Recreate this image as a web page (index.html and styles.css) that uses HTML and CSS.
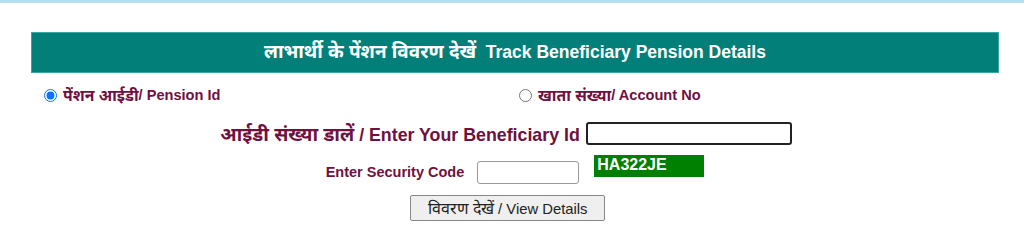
FILE: index.html
```html
<!DOCTYPE html>
<html lang="hi">
<head>
  <meta charset="UTF-8" />
  <title>Track Beneficiary Pension Details</title>
  <link rel="stylesheet" href="styles.css">
</head>
<body>
  <!-- top strip -->
  <div class="topline"></div>

  <div class="panel">
    <!-- Heading -->
    <div class="head"><span class="hi">लाभार्थी के पेंशन विवरण देखें</span>&nbsp; Track Beneficiary Pension Details</div>

    <!-- Search type -->
    <div class="choices">
      <label class="choice first"><input type="radio" name="kind" checked><span class="hi">पेंशन आईडी</span>/ Pension Id</label>
      <label class="choice"><input type="radio" name="kind"><span class="hi">खाता संख्या</span>/ Account No</label>
    </div>

    <!-- Beneficiary id -->
    <div class="row id-row">
      <span class="big-label"><span class="hi">आईडी संख्या डालें</span> / Enter Your Beneficiary Id</span>
      <input type="text" class="id-box" autofocus>
    </div>

    <!-- Captcha -->
    <div class="row code-row">
      <span class="small-label">Enter Security Code</span>
      <input type="text" class="code-box">
      <span class="captcha">HA322JE</span>
    </div>

    <div class="row btn-row">
      <button class="btn"><span class="hi">विवरण देखें</span> / View Details</button>
    </div>
  </div>
</body>
</html>
```

FILE: styles.css
```css
* {
  box-sizing: border-box;
}

body {
  margin: 0;
  font-family: 'Liberation Sans', Arial, 'Noto Sans', sans-serif;
  background: #fff;
  color: #701040;
}

/* Devanagari runs a little larger than the latin text */
.hi {
  font-size: 1.08em;
}

.topline {
  height: 3px;
  background: #b5def2;
}

.panel {
  width: 968px;
  margin: 29px 0 0 31px;
}

/* Teal title bar */
.head {
  height: 41px;
  line-height: 37px;
  background: #037f7a;
  border: 1px solid #3aa6a2;
  color: #fff;
  font-size: 17.5px;
  font-weight: bold;
  text-align: center;
}

.choices {
  display: grid;
  grid-template-columns: 488px 480px;
  margin-top: 11px;
  height: 20px;
  align-items: center;
}

.choice {
  display: flex;
  align-items: center;
  font-size: 14.6px;
  font-weight: bold;
  white-space: pre;
}

.choice input {
  margin: 0 6px 0 0;
  width: 13px;
  height: 13px;
}

.choice.first {
  padding-left: 13px;
}

.row {
  display: flex;
  justify-content: center;
  align-items: center;
}

.id-row {
  margin-top: 16px;
  padding-right: 18px;
}

.big-label {
  font-size: 17.8px;
  font-weight: bold;
  margin-right: 6px;
}

.id-box {
  width: 206px;
  height: 23px;
  border: 2px solid #222;
  border-radius: 3px;
  outline: none;
}

.code-row {
  margin-top: 8px;
  align-items: flex-start;
  height: 29px;
}

.small-label {
  font-size: 14.5px;
  font-weight: bold;
  margin: 9px 13px 0 0;
}

.code-box {
  width: 102px;
  height: 23px;
  margin-top: 6px;
  border: 1px solid #999;
  border-radius: 3px;
}

.captcha {
  width: 110px;
  height: 22px;
  margin-left: 15px;
  padding-left: 3px;
  background: #008000;
  color: #fff;
  font-size: 16px;
  font-weight: bold;
  line-height: 20px;
}

.btn-row {
  margin-top: 11px;
  padding-right: 15px;
}

.btn {
  width: 195px;
  height: 26px;
  font-family: 'Liberation Sans', Arial, sans-serif;
  font-size: 14.8px;
  color: #222;
  background: #efefef;
  border: 1px solid #888;
  border-radius: 2px;
  padding: 0;
}
```
